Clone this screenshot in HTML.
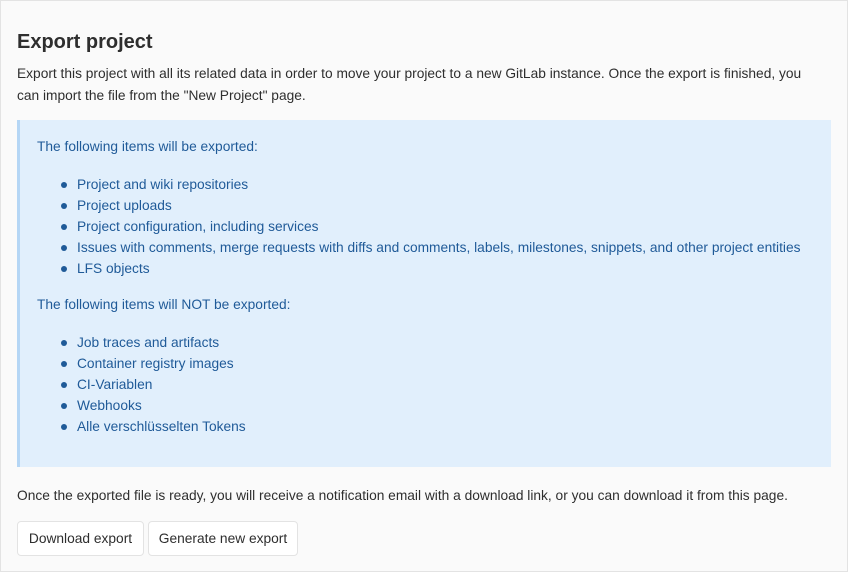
<!DOCTYPE html>
<html><head><meta charset="utf-8"><style>
html,body{margin:0;padding:0}
body{width:848px;height:572px;overflow:hidden;font-family:"Liberation Sans",sans-serif;color:#2e2e2e;font-size:13.75px}
.wrap{position:absolute;left:0;top:0;width:846px;height:570px;border:1px solid #e3e3e3;background:#fafafa}
h1{position:absolute;left:16px;top:28px;margin:0;font-size:20px;font-weight:bold;color:#2e2e2e;line-height:26px}
.p1{position:absolute;left:16px;top:62px;width:800px;line-height:22px;margin:0}
.box{position:absolute;left:16px;top:119px;width:811px;height:347px;background:#e1effc;border-left:3px solid #b5d6f5;color:#1f5a98}
.box p{position:absolute;left:17px;margin:0;line-height:20px}
.box ul{position:absolute;left:20px;margin:0;padding-left:37px;line-height:21px;list-style:none}
.box li{position:relative;white-space:nowrap}
.box li:before{content:"";position:absolute;left:-16px;top:8px;width:6px;height:6px;border-radius:50%;background:#1f5a98}
.p2{position:absolute;left:16px;top:484px;margin:0;line-height:22px;white-space:nowrap}
.btn{position:absolute;top:520px;height:33px;border:1px solid #e3e3e3;border-radius:4px;background:#fff;line-height:33px;text-align:center;color:#2e2e2e}
</style></head><body><div class="wrap">
<h1>Export project</h1>
<p class="p1">Export this project with all its related data in order to move your project to a new GitLab instance. Once the export is finished, you<br>can import the file from the "New Project" page.</p>
<div class="box">
<p style="top:17px">The following items will be exported:</p>
<ul style="top:54px"><li>Project and wiki repositories</li><li>Project uploads</li><li>Project configuration, including services</li><li>Issues with comments, merge requests with diffs and comments, labels, milestones, snippets, and other project entities</li><li>LFS objects</li></ul>
<p style="top:175px">The following items will NOT be exported:</p>
<ul style="top:212px"><li>Job traces and artifacts</li><li>Container registry images</li><li>CI-Variablen</li><li>Webhooks</li><li>Alle verschlüsselten Tokens</li></ul>
</div>
<p class="p2">Once the exported file is ready, you will receive a notification email with a download link, or you can download it from this page.</p>
<div class="btn" style="left:16px;width:125px">Download export</div>
<div class="btn" style="left:147px;width:148px">Generate new export</div>
</div></body></html>
